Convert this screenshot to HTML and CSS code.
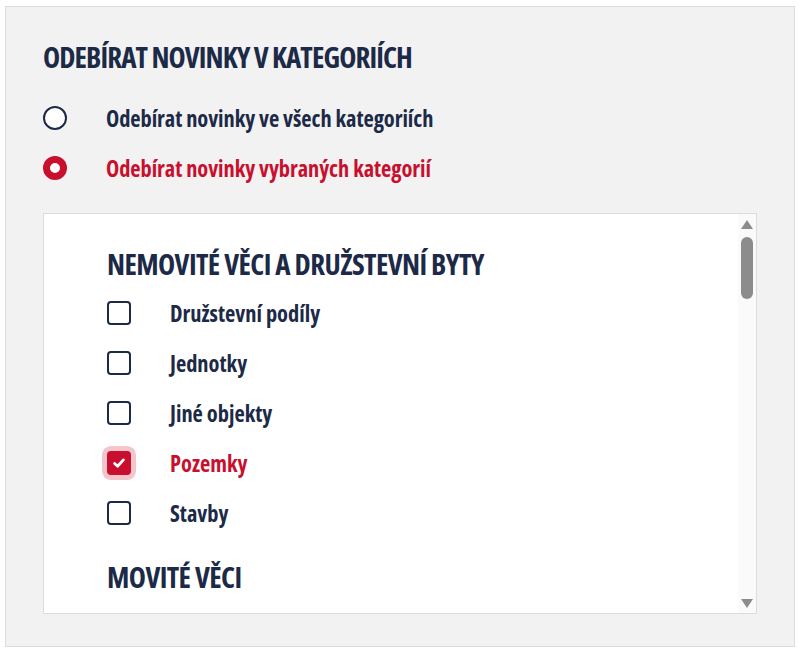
FILE: index.html
```html
<!DOCTYPE html>
<html lang="cs">
<head>
<meta charset="utf-8">
<title>Odebírat novinky</title>
<link rel="stylesheet" href="styles.css">
</head>
<body>
<section class="panel">
  <h2 class="title">ODEBÍRAT NOVINKY V KATEGORIÍCH</h2>
  <div class="radios">
    <label class="radio"><span class="radio-dot"></span><span class="radio-text">Odebírat novinky ve všech kategoriích</span></label>
    <label class="radio is-checked"><span class="radio-dot"></span><span class="radio-text">Odebírat novinky vybraných kategorií</span></label>
  </div>
  <div class="box">
    <div class="box-content">
      <div class="group">
        <h3 class="group-title">NEMOVITÉ VĚCI A DRUŽSTEVNÍ BYTY</h3>
        <ul class="checks">
          <li class="check"><span class="cb"></span><span class="cb-text">Družstevní podíly</span></li>
          <li class="check"><span class="cb"></span><span class="cb-text">Jednotky</span></li>
          <li class="check"><span class="cb"></span><span class="cb-text">Jiné objekty</span></li>
          <li class="check is-checked"><span class="cb"><svg viewBox="0 0 14 14" width="14" height="14"><path d="M2.6 7.4 L5.6 10.2 L11.4 3.9" fill="none" stroke="#fff" stroke-width="2.8" stroke-linecap="round" stroke-linejoin="round"/></svg></span><span class="cb-text">Pozemky</span></li>
          <li class="check"><span class="cb"></span><span class="cb-text">Stavby</span></li>
        </ul>
      </div>
      <div class="group">
        <h3 class="group-title">MOVITÉ VĚCI</h3>
      </div>
    </div>
    <div class="scrollbar" aria-hidden="true">
      <span class="sb-arrow sb-up"></span>
      <span class="sb-thumb"></span>
      <span class="sb-space"></span>
      <span class="sb-arrow sb-down"></span>
    </div>
  </div>
</section>
</body>
</html>
```
FILE: styles.css
```css
html, body {
  margin: 0;
  padding: 0;
  background: #ffffff;
}
body {
  font-family: "Open Sans", "Liberation Sans Narrow", "DejaVu Sans Condensed", sans-serif;
  font-stretch: 75%;
  color: #1c2a47;
}
.panel {
  box-sizing: border-box;
  width: 790px;
  height: 641px;
  margin: 6px 0 0 5px;
  padding: 33px 37px 0 37px;
  background: #f2f2f2;
  border: 1px solid #dcdcdc;
}
.title {
  margin: 0;
  font-size: 29px;
  line-height: 34px;
  font-weight: 700;
  letter-spacing: -0.9px;
}
.radios {
  display: flex;
  flex-direction: column;
  gap: 14px;
  margin-top: 26px;
}
.radio {
  display: flex;
  align-items: center;
  gap: 39px;
  height: 36px;
  font-size: 22.4px;
  font-weight: 700;
  letter-spacing: -0.05px;
}
.radio-dot {
  box-sizing: border-box;
  width: 24px;
  height: 24px;
  border-radius: 50%;
  border: 2px solid #1c2a47;
  background: #fff;
  flex: none;
}
.radio.is-checked {
  color: #c8102e;
}
.radio.is-checked .radio-dot {
  border: 7px solid #c8102e;
}
.box {
  box-sizing: border-box;
  margin-top: 27px;
  height: 401px;
  background: #ffffff;
  border: 1px solid #dcdcdc;
  display: flex;
}
.box-content {
  flex: 1;
  overflow: hidden;
  padding: 30px 0 0 63px;
}
.group-title {
  margin: 0;
  font-size: 29px;
  line-height: 40px;
  font-weight: 700;
  letter-spacing: -0.6px;
}
.checks {
  list-style: none;
  margin: 11px 0 26px;
  padding: 0;
  display: flex;
  flex-direction: column;
  gap: 14px;
}
.check {
  display: flex;
  align-items: center;
  gap: 39px;
  height: 36px;
  font-size: 22.4px;
  font-weight: 700;
}
.cb {
  box-sizing: border-box;
  width: 24px;
  height: 24px;
  border: 2px solid #1c2a47;
  border-radius: 4px;
  background: #fff;
  flex: none;
  display: flex;
  align-items: center;
  justify-content: center;
}
.check.is-checked {
  color: #c8102e;
}
.check.is-checked .cb {
  background: #c8102e;
  border-color: #c8102e;
  box-shadow: 0 0 0 5px #f3c6cb;
}
.scrollbar {
  width: 18px;
  flex: none;
  background: #fafafa;
  display: flex;
  flex-direction: column;
  align-items: center;
  padding: 6px 0 5px;
  box-sizing: border-box;
}
.sb-arrow {
  width: 0;
  height: 0;
  border-left: 6px solid transparent;
  border-right: 6px solid transparent;
}
.sb-up {
  border-bottom: 9px solid #8c8c8c;
}
.sb-down {
  border-top: 9px solid #8c8c8c;
}
.sb-thumb {
  margin-top: 8px;
  width: 12px;
  height: 62px;
  border-radius: 6px;
  background: #8c8c8c;
}
.sb-space {
  flex: 1;
}
```
